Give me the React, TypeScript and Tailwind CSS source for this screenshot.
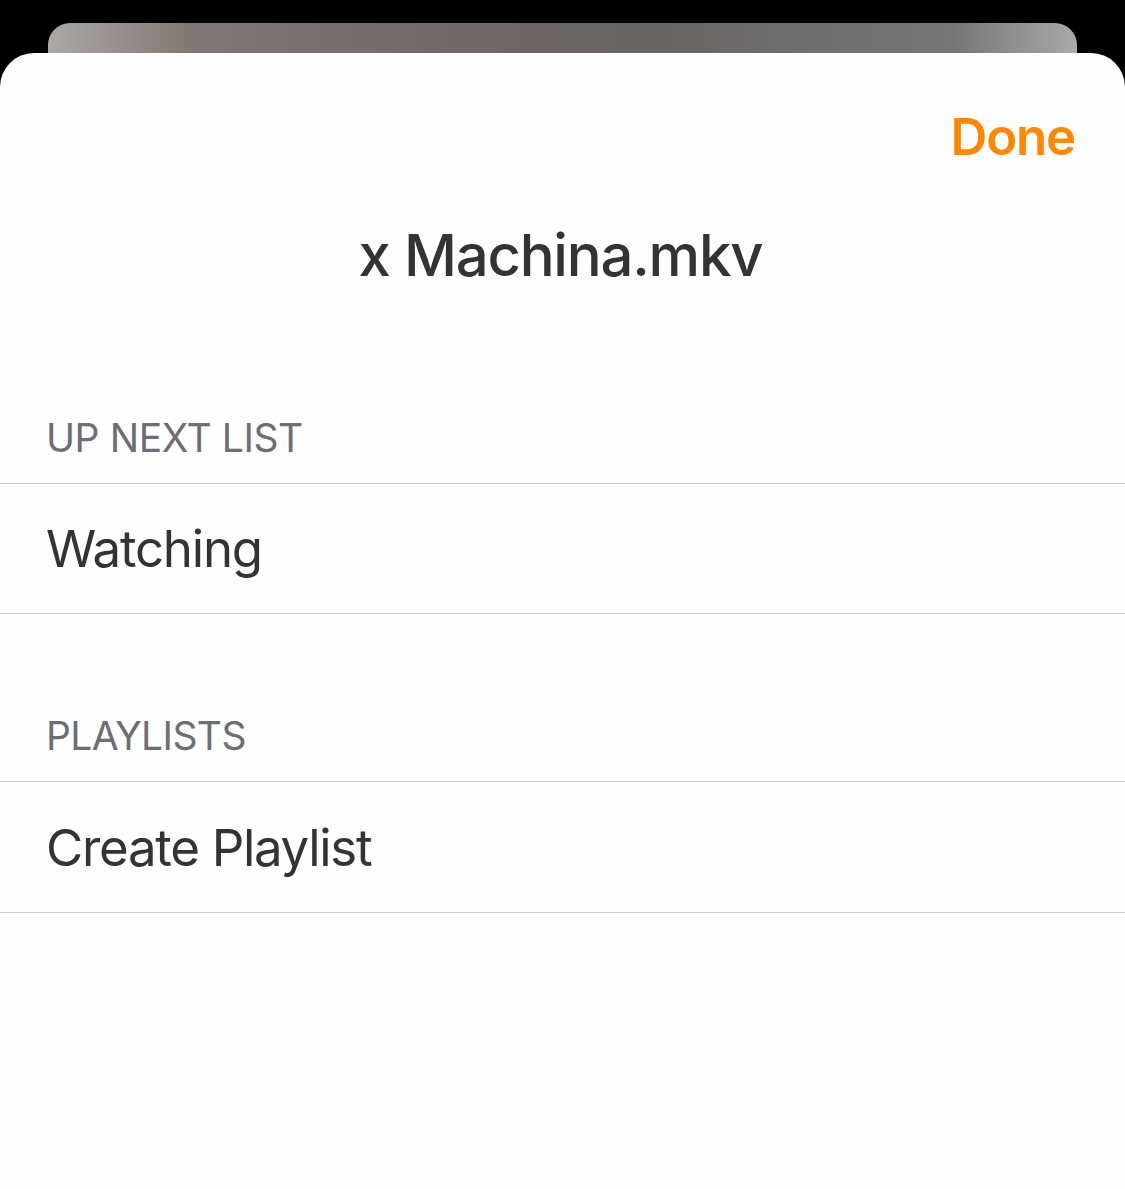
import React from "react";

export default function App() {
  const font = { fontFamily: "Inter, 'Noto Sans', sans-serif" };
  return (
    <div className="h-[1189px] w-[1125px] bg-black flex flex-col overflow-hidden" style={font}>
      <div className="h-[23px] shrink-0" />
      <div className="mx-[48px] h-[30px] shrink-0 rounded-t-[22px] bg-[linear-gradient(90deg,#aca8a5_0%,#7f7875_14%,#6e6866_40%,#696563_60%,#6f6f6f_74%,#767676_88%,#a9a9a9_100%)]" />
      <div className="flex-1 bg-[#fefefe] rounded-t-[34px] flex flex-col">
        <div className="h-[58px] shrink-0" />
        <div className="flex justify-end pr-[50px]">
          <span className="text-[51px] leading-[51px] font-semibold text-[#ff8800] tracking-[-1.2px]">Done</span>
        </div>
        <div className="h-[63px] shrink-0" />
        <div className="flex justify-center pr-[4px]">
          <span className="text-[58px] leading-[60px] font-medium text-[#333333] tracking-[-1.2px]">x Machina.mkv</span>
        </div>
        <div className="h-[133px] shrink-0" />
        <div className="px-[46px] pb-[25px]">
          <span className="text-[39px] leading-[39px] text-[#6d6d72] tracking-[-0.4px]">UP NEXT LIST</span>
        </div>
        <div className="border-y border-[#c8c7cc] h-[131px] flex items-center px-[46px]">
          <span className="text-[51px] leading-[51px] text-[#333333] tracking-[-1.2px]">Watching</span>
        </div>
        <div className="h-[102px] shrink-0" />
        <div className="px-[46px] pb-[25px]">
          <span className="text-[39px] leading-[39px] text-[#6d6d72] tracking-[-0.6px]">PLAYLISTS</span>
        </div>
        <div className="border-y border-[#c8c7cc] h-[132px] flex items-center px-[46px]">
          <span className="text-[51px] leading-[51px] text-[#333333] tracking-[-1.3px]">Create Playlist</span>
        </div>
      </div>
    </div>
  );
}
